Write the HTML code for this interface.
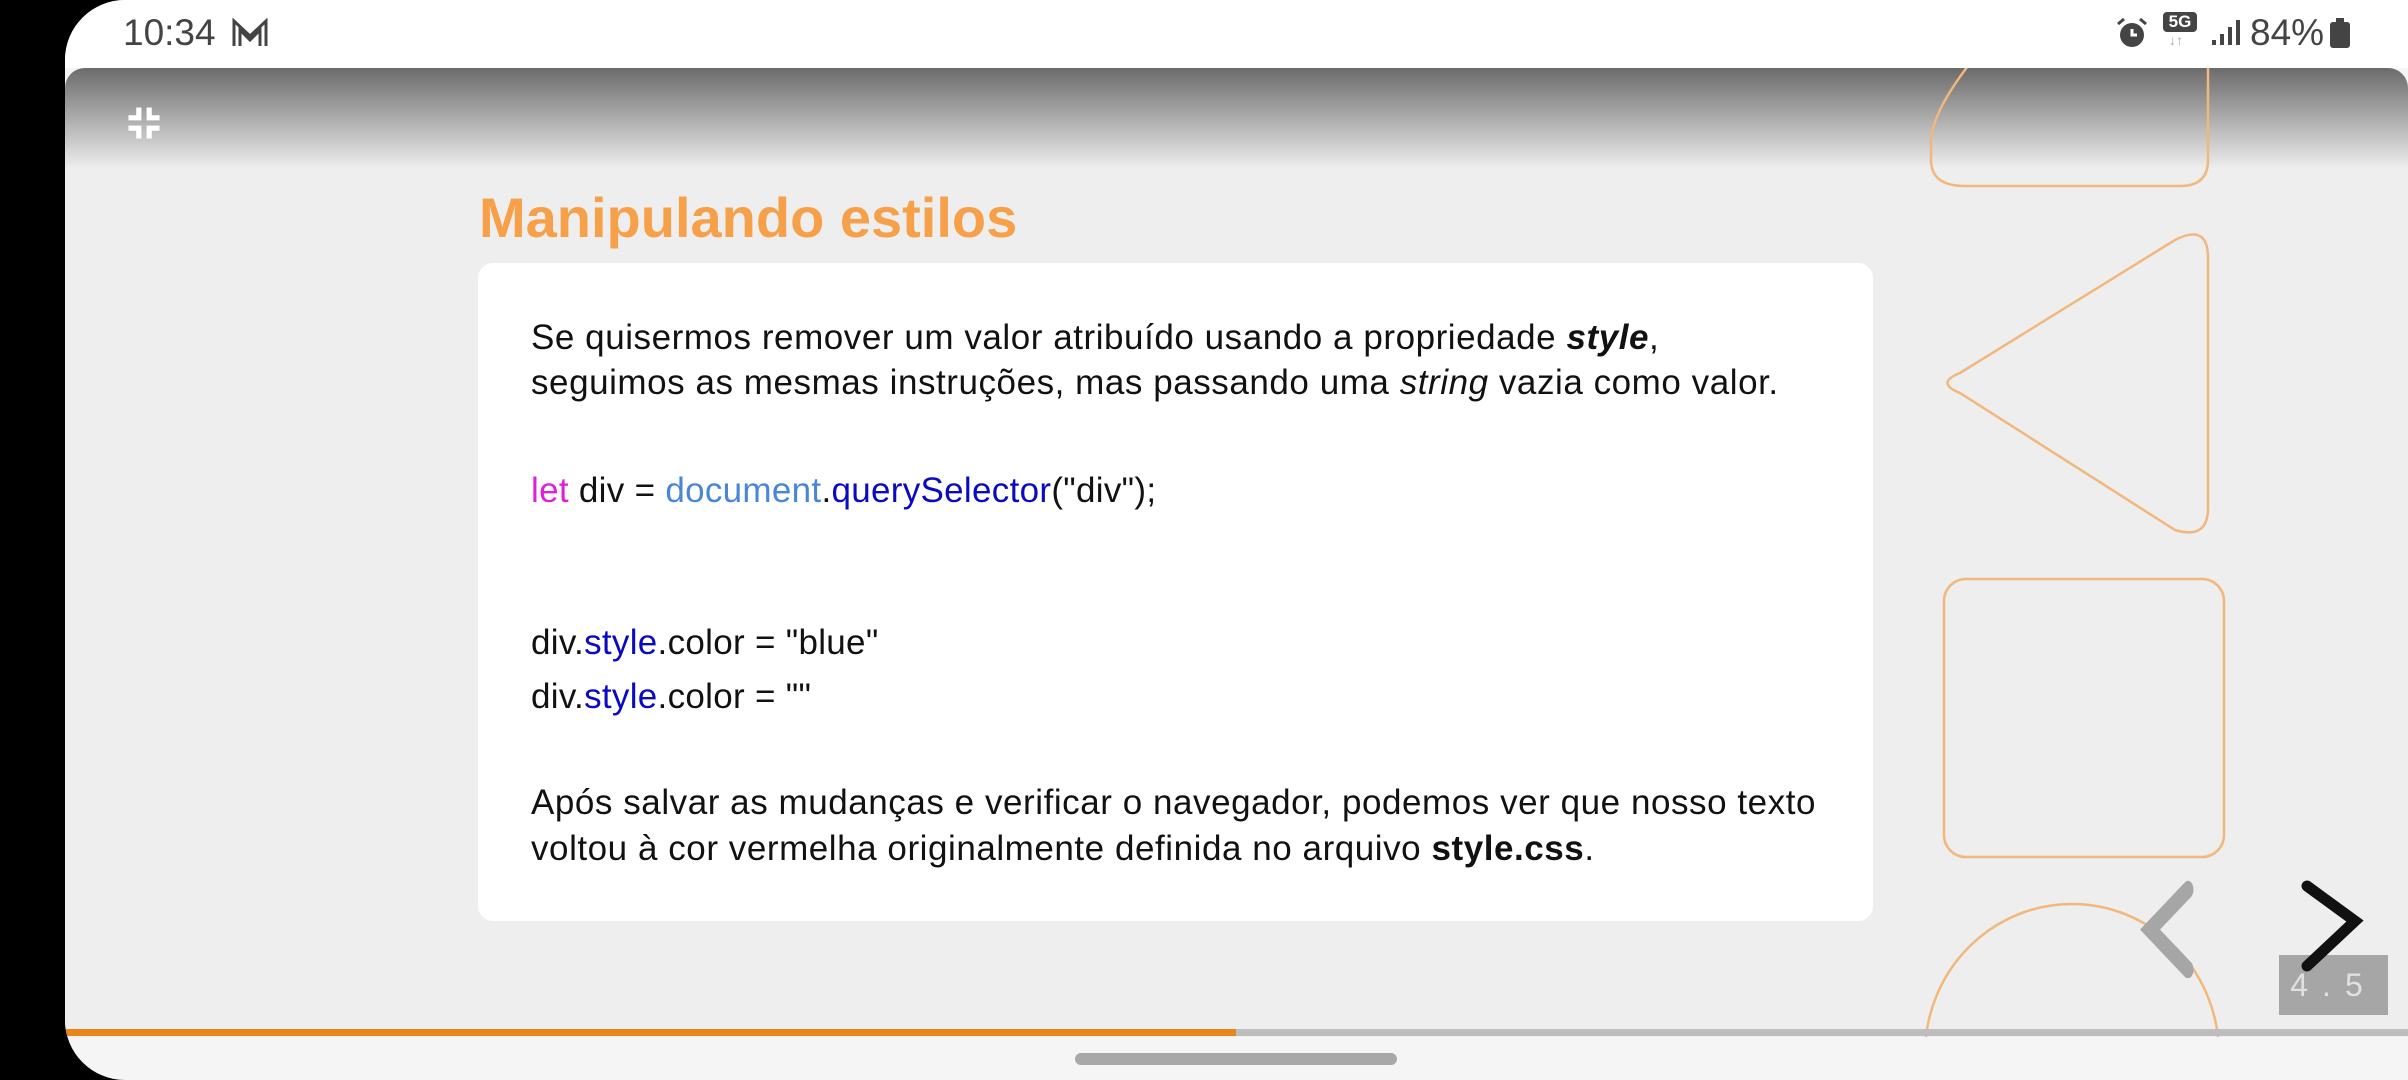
<!DOCTYPE html>
<html style="overflow:hidden"><head><meta charset="utf-8"><style>
*{margin:0;padding:0;box-sizing:border-box}
html,body{width:2408px;height:1080px;overflow:hidden}
body{background:#000;position:relative;font-family:"Liberation Sans",sans-serif}
#screen{position:absolute;left:65px;top:0;width:2343px;height:1080px;background:#f5f5f5;border-top-left-radius:60px;border-bottom-left-radius:60px;overflow:hidden}
#status{position:absolute;left:0;top:0;width:100%;height:68px;background:#fff}
#slide{position:absolute;left:0;top:68px;width:100%;height:969px;background:#eeeeee;border-top-left-radius:20px;border-top-right-radius:20px;overflow:hidden}
#grad{position:absolute;left:0;top:0;width:100%;height:101px;background:linear-gradient(#6b6b6b,#eeeeee)}
.t{position:absolute;white-space:nowrap;color:#111;font-size:35px;letter-spacing:0.55px}
.c{letter-spacing:0.3px}
</style></head><body>
<div id="screen">
 <div id="status">
  <div style="position:absolute;left:58px;top:12px;font-size:37px;color:#444">10:34</div>
  <svg style="position:absolute;left:166px;top:18px" width="38" height="30" viewBox="0 0 38 30"><path d="M3 28V3L19 18L35 3V28M9 28V12L19 22L29 12V28" fill="none" stroke="#444" stroke-width="3"/></svg>
  <svg style="position:absolute;left:2050px;top:16px" width="34" height="34" viewBox="0 0 34 34"><circle cx="17" cy="19" r="12" fill="#444"/><path d="M17 13V19H22" stroke="#fff" stroke-width="3" fill="none"/><path d="M3 8L9 3M31 8L25 3" stroke="#444" stroke-width="3"/></svg>
  <div style="position:absolute;left:2098px;top:12px;width:34px;height:20px;background:#444;border-radius:4px;color:#fff;font-size:17px;font-weight:bold;text-align:center;line-height:20px">5G</div>
  <div style="position:absolute;left:2104px;top:32px;font-size:14px;color:#aaa">↓↑</div>
  <svg style="position:absolute;left:2145px;top:16px" width="30" height="32"><rect x="2" y="24" width="4" height="5" fill="#444"/><rect x="10" y="18" width="4" height="11" fill="#444"/><rect x="18" y="11" width="4" height="18" fill="#444"/><rect x="26" y="4" width="4" height="25" fill="#444"/></svg>
  <div style="position:absolute;left:2185px;top:12px;font-size:37px;color:#444">84%</div>
  <div style="position:absolute;left:2265px;top:22px;width:20px;height:26px;background:#444;border-radius:3px"></div>
  <div style="position:absolute;left:2271px;top:18px;width:8px;height:5px;background:#444"></div>
 </div>
 <div id="slide">
  <div id="grad"></div>
  <svg style="position:absolute;left:60px;top:36px" width="38" height="38" viewBox="0 0 44 44" fill="none" stroke="#fff" stroke-width="6"><path d="M4 16H16V4M28 4V16H40M4 28H16V40M28 40V28H40"/></svg>
  <svg style="position:absolute;left:0;top:0" width="2343" height="969" fill="none" stroke="#f2b77c" stroke-width="2.5">
   <path d="M1935 -40 Q1862 40 1866 80 L1866 92 Q1866 118 1900 118 L2115 118 Q2143 118 2143 92 L2143 -40"/>
   <path d="M1895 305 L2110 172 Q2143 155 2143 190 L2143 440 Q2143 472 2110 462 L1895 325 Q1870 315 1895 305 Z"/>
   <rect x="1879" y="511" width="280" height="278" rx="22"/>
   <ellipse cx="2007" cy="986" rx="147" ry="150"/>
  </svg>
  <div class="t" style="left:414px;top:117px;font-size:56px;font-weight:bold;color:#f7a04a;letter-spacing:0">Manipulando estilos</div>
  <div style="position:absolute;left:413px;top:195px;width:1395px;height:658px;background:#fff;border-radius:15px"></div>
  <div class="t" style="left:466px;top:250px">Se quisermos remover um valor atribuído usando a propriedade <b><i>style</i></b>,</div>
  <div class="t" style="left:466px;top:295px">seguimos as mesmas instruções, mas passando uma <i>string</i> vazia como valor.</div>
  <div class="t c" style="left:466px;top:403px"><span style="color:#e020d8">let</span> div = <span style="color:#4a86d8">document</span>.<span style="color:#0a0ac0">querySelector</span>("div");</div>
  <div class="t c" style="left:466px;top:555px">div.<span style="color:#0a0ac0">style</span>.color = "blue"</div>
  <div class="t c" style="left:466px;top:609px">div.<span style="color:#0a0ac0">style</span>.color = ""</div>
  <div class="t" style="left:466px;top:715px">Após salvar as mudanças e verificar o navegador, podemos ver que nosso texto</div>
  <div class="t" style="left:466px;top:761px">voltou à cor vermelha originalmente definida no arquivo <b>style.css</b>.</div>
  <svg style="position:absolute;left:2075px;top:810px" width="60" height="100" fill="none" stroke="#a6a6a6" stroke-width="11" stroke-linecap="round"><path d="M48 6L10 31L48 56" transform="translate(0,2) scale(1,1.6)"/></svg>
  <div style="position:absolute;left:2214px;top:887px;width:109px;height:60px;background:#a6a6a6;color:#e0e0e0;font-size:32px;text-align:center;line-height:60px;letter-spacing:14px">4.5</div>
  <svg style="position:absolute;left:2230px;top:810px" width="70" height="100" fill="none" stroke="#111" stroke-width="11" stroke-linecap="round"><path d="M12 8L60 43L12 88"/></svg>
  <div style="position:absolute;left:0;top:961px;width:100%;height:7px;background:#bdbdbd"></div>
  <div style="position:absolute;left:0;top:961px;width:1171px;height:7px;background:#e8861a"></div>
 </div>
 <div style="position:absolute;left:1010px;top:1053px;width:322px;height:12px;background:#a8a8a8;border-radius:6px"></div>
</div>
</body></html>
